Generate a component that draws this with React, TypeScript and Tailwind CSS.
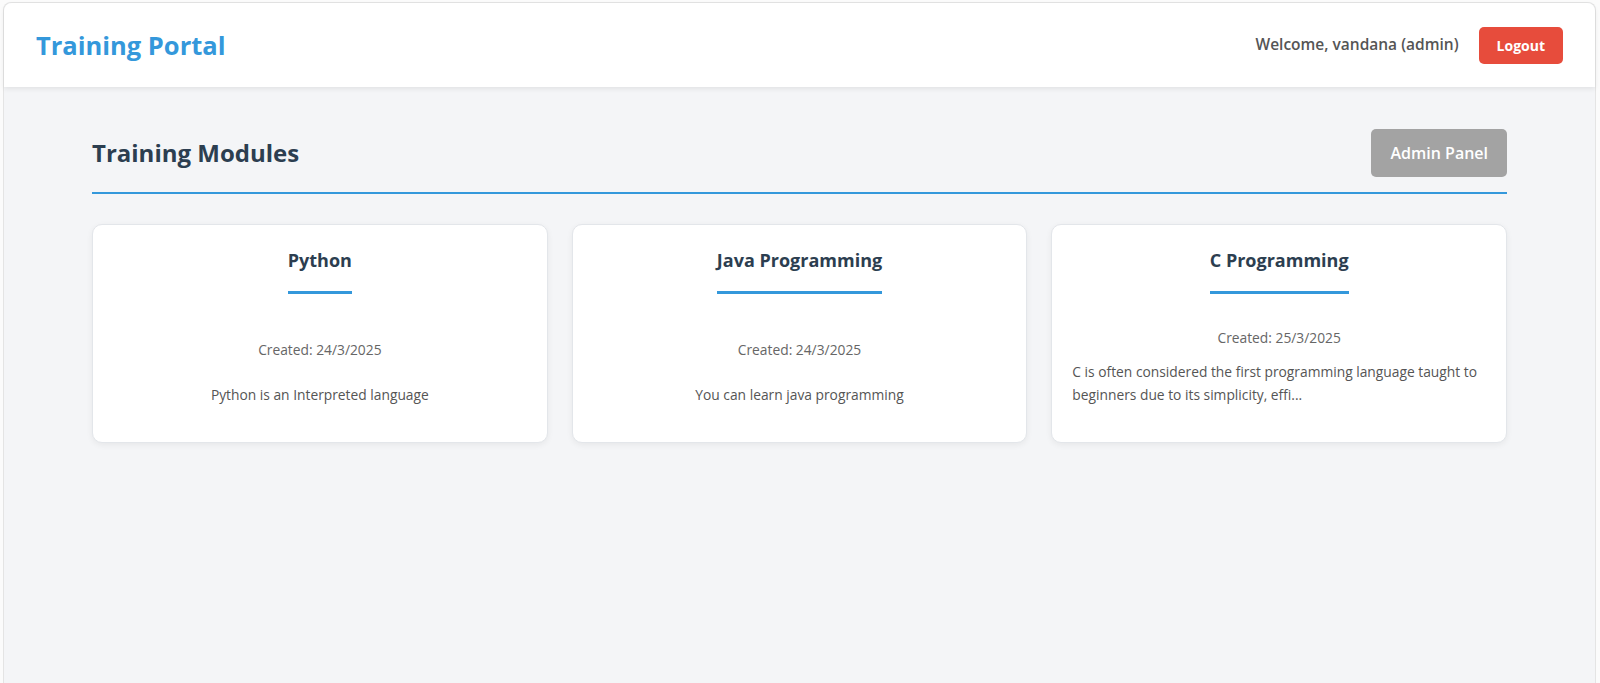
import React from "react";

const modules = [
  {
    title: "Python",
    created: "24/3/2025",
    desc: "Python is an Interpreted language",
  },
  {
    title: "Java Programming",
    created: "24/3/2025",
    desc: "You can learn java programming",
  },
  {
    title: "C Programming",
    created: "25/3/2025",
    desc: "C is often considered the first programming language taught to beginners due to its simplicity, effi...",
  },
];

export default function App() {
  return (
    <div
      className="h-[683px] w-full overflow-hidden bg-[#fbfbfb] pt-[2px] pl-[3px] pr-[4px]"
      style={{ fontFamily: "'Segoe UI', 'Open Sans', 'Noto Sans', sans-serif" }}
    >
      <div className="h-[681px] rounded-t-[8px] border border-b-0 border-[#e4e4e4] bg-[#f4f5f7]">
        <header className="flex h-[84px] items-center justify-between rounded-t-[8px] bg-white px-8 shadow-[0_2px_5px_rgba(0,0,0,0.08)]">
          <h1 className="text-[25.5px] font-bold text-[#3498db]">Training Portal</h1>
          <div className="flex items-center gap-5">
            <span className="text-[15.5px] font-semibold text-[#555555]">Welcome, vandana (admin)</span>
            <button className="h-[37px] rounded-[5px] bg-[#e74c3c] px-[18px] text-[14px] font-bold text-white">
              Logout
            </button>
          </div>
        </header>

        <main className="mx-[88px] pt-[42px]">
          <div className="flex items-center justify-between border-b-2 border-[#3498db] pb-[15px]">
            <h2 className="text-[24px] font-bold text-[#2c3e50]">Training Modules</h2>
            <button className="h-[48px] rounded-[5px] bg-[#a3a3a3] px-[19px] text-[16px] font-semibold text-white">
              Admin Panel
            </button>
          </div>

          <div className="mt-[30px] grid grid-cols-3 gap-6">
            {modules.map((m) => (
              <div
                key={m.title}
                className="flex flex-col justify-between rounded-[10px] border border-[#e3e6ea] bg-white px-5 pt-[21px] pb-[36px] shadow-[0_2px_6px_rgba(0,0,0,0.06)]"
              >
                <div className="text-center">
                  <h3 className="inline-block border-b-[3px] border-[#3498db] pb-[16px] text-[18px] leading-[29px] font-bold text-[#2c3e50]">
                    {m.title}
                  </h3>
                </div>
                <p className="mt-[33px] text-center text-[13.8px] leading-[21px] text-[#666666]">
                  Created: {m.created}
                </p>
                <p className="mt-[12px] text-center text-[13.8px] leading-[23px] text-[#555555]">
                  {m.desc.length > 70 ? (
                    <span className="block text-left">{m.desc}</span>
                  ) : (
                    m.desc
                  )}
                </p>
              </div>
            ))}
          </div>
        </main>
      </div>
    </div>
  );
}
